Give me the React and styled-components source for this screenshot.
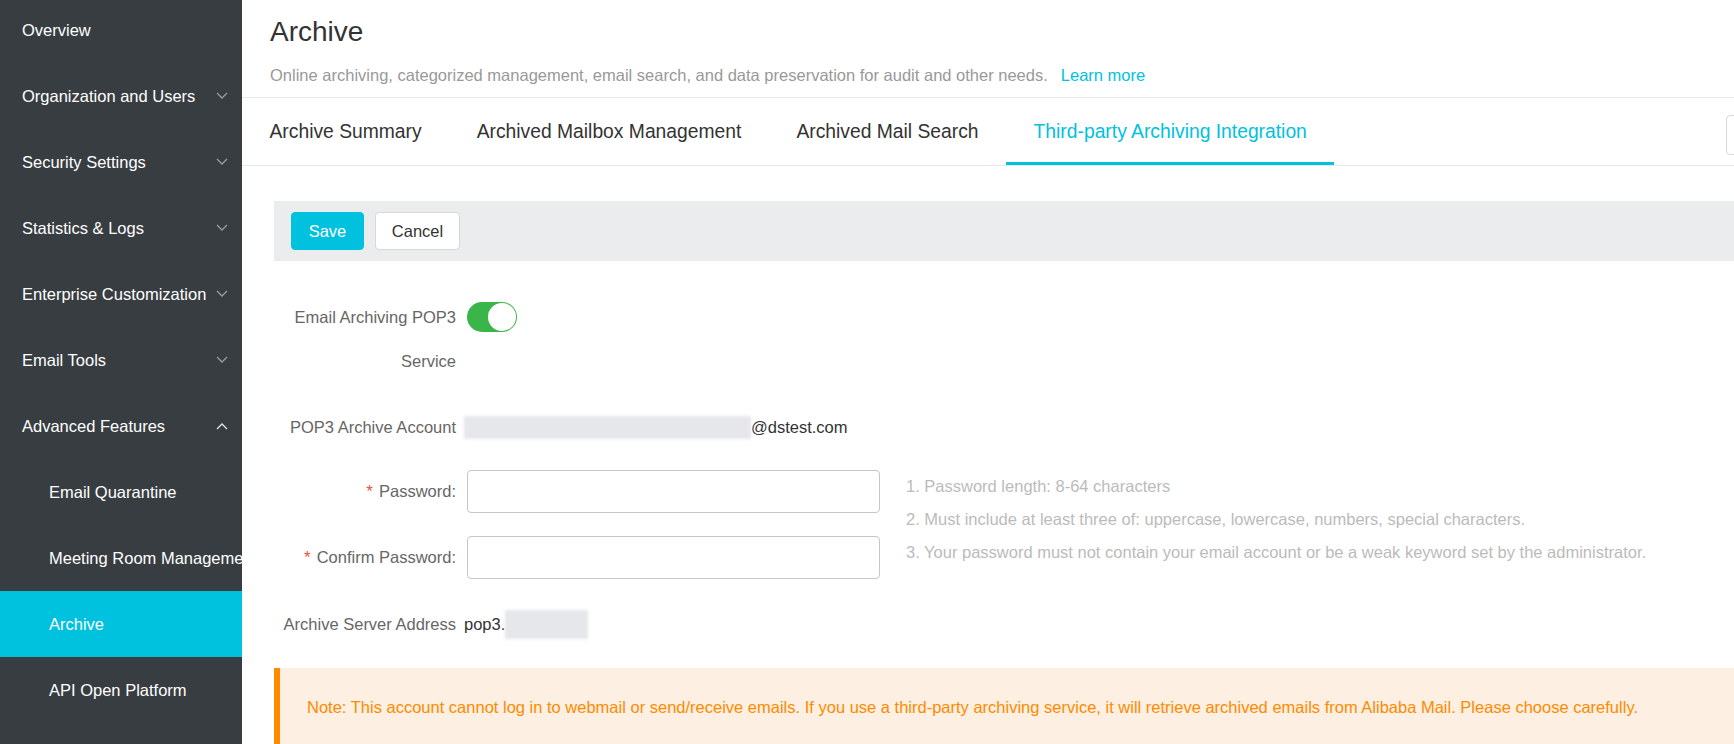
import React from "react";
import styled, { createGlobalStyle } from "styled-components";

const GlobalStyle = createGlobalStyle`
  body {
    margin: 0;
    font-family: "Liberation Sans", Arial, sans-serif;
    font-size: 16.5px;
    overflow: hidden;
  }
`;

const menu = [
  { label: "Overview" },
  { label: "Organization and Users", arrow: "down" },
  { label: "Security Settings", arrow: "down" },
  { label: "Statistics & Logs", arrow: "down" },
  { label: "Enterprise Customization", arrow: "down" },
  { label: "Email Tools", arrow: "down" },
  { label: "Advanced Features", arrow: "up" },
  { label: "Email Quarantine", sub: true },
  { label: "Meeting Room Management", sub: true },
  { label: "Archive", sub: true, active: true },
  { label: "API Open Platform", sub: true },
];

const tabs = [
  "Archive Summary",
  "Archived Mailbox Management",
  "Archived Mail Search",
  "Third-party Archiving Integration",
];

const hints = [
  "1. Password length: 8-64 characters",
  "2. Must include at least three of: uppercase, lowercase, numbers, special characters.",
  "3. Your password must not contain your email account or be a weak keyword set by the administrator.",
];

const Chevron = ({ dir }) => (
  <svg width="12" height="8" viewBox="0 0 12 8">
    <path
      d={dir === "up" ? "M1 7 L6 2 L11 7" : "M1 1 L6 6 L11 1"}
      fill="none"
      stroke={dir === "up" ? "#e6e6e6" : "#9a9ea2"}
      strokeWidth="1.3"
    />
  </svg>
);

const App = () => {
  return (
    <Page>
      <GlobalStyle />
      <Sidebar>
        <Nav>
          {menu.map((m) => (
            <NavItem key={m.label} $sub={m.sub} $active={m.active}>
              <span>{m.label}</span>
              {m.arrow && <Chevron dir={m.arrow} />}
            </NavItem>
          ))}
        </Nav>
      </Sidebar>
      <Main>
        <Header>
          <Title>Archive</Title>
          <Subtitle>
            Online archiving, categorized management, email search, and data
            preservation for audit and other needs.
            <a>Learn more</a>
          </Subtitle>
        </Header>
        <TabRow>
          {tabs.map((t, i) => (
            <Tab key={t} $active={i === 3}>
              {t}
            </Tab>
          ))}
          <EdgeButton />
        </TabRow>
        <Content>
          <ActionBar>
            <Button $primary>Save</Button>
            <Button>Cancel</Button>
          </ActionBar>
          <Form>
            <Row>
              <Label>Email Archiving POP3 Service</Label>
              <Switch>
                <Knob />
              </Switch>
            </Row>
            <Row $top={22}>
              <Label>POP3 Archive Account</Label>
              <Value>
                <Blur $w={287} />
                @dstest.com
              </Value>
            </Row>
            <PasswordBlock>
              <div>
                <Row $top={0}>
                  <Label $input>
                    <Star>*</Star>Password:
                  </Label>
                  <Input type="password" />
                </Row>
                <Row $top={23}>
                  <Label $input>
                    <Star>*</Star>Confirm Password:
                  </Label>
                  <Input type="password" />
                </Row>
              </div>
              <Hints>
                {hints.map((h) => (
                  <div key={h}>{h}</div>
                ))}
              </Hints>
            </PasswordBlock>
            <Row $top={23}>
              <Label>Archive Server Address</Label>
              <Value>
                pop3.
                <Blur $w={83} $h={29} />
              </Value>
            </Row>
          </Form>
          <Notice>
            Note: This account cannot log in to webmail or send/receive emails.
            If you use a third-party archiving service, it will retrieve
            archived emails from Alibaba Mail. Please choose carefully.
          </Notice>
        </Content>
      </Main>
    </Page>
  );
};

export default App;

const Page = styled.div`
  display: flex;
  height: 744px;
  width: 1734px;
  overflow: hidden;
`;

const Sidebar = styled.div`
  width: 242px;
  flex-shrink: 0;
  background: #373d41;
  overflow: hidden;
`;

const Nav = styled.div`
  margin-top: -3px;
`;

const NavItem = styled.div`
  display: flex;
  align-items: center;
  justify-content: space-between;
  height: 66px;
  padding: 0 14px 0 ${(p) => (p.$sub ? "49px" : "22px")};
  color: #fff;
  white-space: nowrap;
  background: ${(p) => (p.$active ? "#00c1de" : "transparent")};
  svg {
    flex-shrink: 0;
  }
`;

const Main = styled.div`
  flex: 1;
  min-width: 0;
  background: #fff;
  overflow: hidden;
`;

const Header = styled.div`
  padding: 16px 0 12px 28px;
  border-bottom: 1px solid #e8e8e8;
`;

const Title = styled.h1`
  margin: 0;
  font-size: 28px;
  font-weight: normal;
  line-height: 32px;
  color: #333;
`;

const Subtitle = styled.div`
  margin-top: 17px;
  line-height: 20px;
  color: #999;
  a {
    color: #00c1de;
    margin-left: 13px;
    cursor: pointer;
  }
`;

const TabRow = styled.div`
  display: flex;
  height: 67px;
  border-bottom: 1px solid #e8e8e8;
`;

const Tab = styled.div`
  display: flex;
  align-items: center;
  padding: 3px 27.5px 0;
  font-size: 19.3px;
  color: ${(p) => (p.$active ? "#00c1de" : "#333")};
  border-bottom: 3px solid ${(p) => (p.$active ? "#00c1de" : "transparent")};
  white-space: nowrap;
`;

const EdgeButton = styled.div`
  margin: 17px -94px 0 auto;
  width: 100px;
  height: 38px;
  border: 1px solid #d9d9d9;
  border-radius: 4px;
  flex-shrink: 0;
`;

const Content = styled.div`
  padding: 35px 0 0 32px;
`;

const ActionBar = styled.div`
  display: flex;
  align-items: center;
  gap: 11px;
  height: 60px;
  padding-left: 17px;
  background: #ebeced;
`;

const Button = styled.button`
  height: 38px;
  padding: 0;
  width: ${(p) => (p.$primary ? "73px" : "85px")};
  font-family: inherit;
  font-size: 16.5px;
  border-radius: 4px;
  border: 1px solid ${(p) => (p.$primary ? "#00c1de" : "#d7d8d9")};
  background: ${(p) => (p.$primary ? "#00c1de" : "#fff")};
  color: ${(p) => (p.$primary ? "#fff" : "#333")};
`;

const Form = styled.div`
  padding-top: 34px;
`;

const Row = styled.div`
  display: flex;
  align-items: flex-start;
  gap: 11px;
  margin-top: ${(p) => (p.$top !== undefined ? p.$top : 0)}px;
`;

const Label = styled.div`
  width: 182px;
  flex-shrink: 0;
  text-align: right;
  color: #666;
  line-height: ${(p) => (p.$input ? "42px" : "44px")};
  white-space: ${(p) => (p.$input ? "nowrap" : "normal")};
`;

const Star = styled.span`
  color: #e8533f;
  font-size: 17px;
  margin-right: 6px;
`;

const Switch = styled.div`
  margin-top: 7px;
  width: 50px;
  height: 30px;
  border-radius: 15px;
  background: #3ab54a;
  display: flex;
  justify-content: flex-end;
  align-items: center;
  padding: 0 1px;
  box-sizing: border-box;
`;

const Knob = styled.div`
  width: 28px;
  height: 28px;
  border-radius: 50%;
  background: #fff;
`;

const Value = styled.div`
  display: flex;
  align-items: center;
  height: 44px;
  color: #333;
  margin-left: -3px;
`;

const Blur = styled.span`
  display: inline-block;
  width: ${(p) => p.$w}px;
  height: ${(p) => p.$h || 23}px;
  background: #e6e7ea;
  filter: blur(1.5px);
`;

const PasswordBlock = styled.div`
  display: flex;
  gap: 26px;
  margin-top: 21px;
`;

const Input = styled.input`
  width: 413px;
  height: 43px;
  box-sizing: border-box;
  border: 1px solid #c4c6cc;
  border-radius: 4px;
  outline: none;
`;

const Hints = styled.div`
  color: #bbb;
  line-height: 33px;
`;

const Notice = styled.div`
  margin-top: 22px;
  height: 78px;
  box-sizing: border-box;
  padding: 29px 0 0 27px;
  line-height: 20px;
  background: #fdf0e3;
  border-left: 6px solid #ff8a00;
  color: #ff8a00;
  white-space: nowrap;
`;
